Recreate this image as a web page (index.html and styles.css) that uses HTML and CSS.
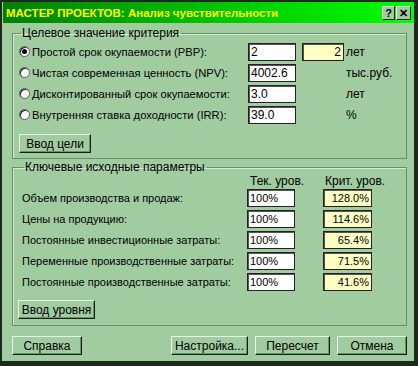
FILE: index.html
```html
<!DOCTYPE html>
<html>
<head>
    <title>МАСТЕР ПРОЕКТОВ: Анализ чувствительности</title>
    <link rel="stylesheet" href="styles.css">
</head>
<body>
    <div class="window">
        <div class="titlebar">
            <span class="title">МАСТЕР ПРОЕКТОВ: Анализ чувствительности</span>
            <div class="tb-buttons">
                <span class="tb-btn">?</span>
                <span class="tb-btn close">✕</span>
            </div>
        </div>

        <div class="content">
            <fieldset class="group goal">
                <legend>Целевое значение критерия</legend>
                <div class="crit-row">
                    <span class="radio checked"></span>
                    <span class="lbl">Простой срок окупаемости (PBP):</span>
                    <span class="field">2</span>
                    <span class="field crit">2</span>
                    <span class="unit">лет</span>
                </div>
                <div class="crit-row">
                    <span class="radio"></span>
                    <span class="lbl">Чистая современная ценность (NPV):</span>
                    <span class="field">4002.6</span>
                    <span></span>
                    <span class="unit">тыс.руб.</span>
                </div>
                <div class="crit-row">
                    <span class="radio"></span>
                    <span class="lbl">Дисконтированный срок окупаемости:</span>
                    <span class="field">3.0</span>
                    <span></span>
                    <span class="unit">лет</span>
                </div>
                <div class="crit-row">
                    <span class="radio"></span>
                    <span class="lbl">Внутренняя ставка доходности (IRR):</span>
                    <span class="field">39.0</span>
                    <span></span>
                    <span class="unit">%</span>
                </div>
                <button class="btn goal-btn">Ввод цели</button>
            </fieldset>

            <fieldset class="group params">
                <legend>Ключевые исходные параметры</legend>
                <div class="param-head">
                    <span></span>
                    <span>Тек. уров.</span>
                    <span>Крит. уров.</span>
                </div>
                <div class="param-row">
                    <span class="lbl">Объем производства и продаж:</span>
                    <span class="field">100%</span>
                    <span class="field crit">128.0%</span>
                </div>
                <div class="param-row">
                    <span class="lbl">Цены на продукцию:</span>
                    <span class="field">100%</span>
                    <span class="field crit">114.6%</span>
                </div>
                <div class="param-row">
                    <span class="lbl">Постоянные инвестиционные затраты:</span>
                    <span class="field">100%</span>
                    <span class="field crit">65.4%</span>
                </div>
                <div class="param-row">
                    <span class="lbl">Переменные производственные затраты:</span>
                    <span class="field">100%</span>
                    <span class="field crit">71.5%</span>
                </div>
                <div class="param-row">
                    <span class="lbl">Постоянные производственные затраты:</span>
                    <span class="field">100%</span>
                    <span class="field crit">41.6%</span>
                </div>
                <button class="btn level-btn">Ввод уровня</button>
            </fieldset>

            <div class="footer">
                <button class="btn help-btn">Справка</button>
                <div class="footer-right">
                    <button class="btn setup-btn">Настройка...</button>
                    <button class="btn calc-btn">Пересчет</button>
                    <button class="btn cancel-btn">Отмена</button>
                </div>
            </div>
        </div>
    </div>
</body>
</html>
```

FILE: styles.css
```css
body {
    margin: 0;
    background-color: #1c2a1c;
    font-family: "Liberation Sans", Arial, sans-serif;
    font-size: 11px;
    color: #000;
}
.window {
    width: 412px;
    height: 359px;
    background-color: #a0cca0;
    border-top: 2px solid #1c2a1c;
    border-left: 2px solid #1c2a1c;
    border-right: 4px solid #1c2a1c;
    border-bottom: 5px solid #1c2a1c;
}
.titlebar {
    height: 21px;
    margin-left: 1px;
    background: linear-gradient(to right, #008000, #00c800 55%, #00ff00);
    display: flex;
    align-items: center;
    justify-content: space-between;
    padding: 0 3px 0 3px;
}
.title {
    color: #ffff00;
    font-weight: bold;
    font-size: 11.5px;
}
.tb-buttons {
    display: flex;
    gap: 1px;
}
.tb-btn {
    width: 11px;
    height: 12px;
    background-color: #a0cca0;
    border: 1px solid;
    border-color: #e6f4e6 #1a1a1a #1a1a1a #e6f4e6;
    font-weight: bold;
    font-size: 11px;
    line-height: 12px;
    text-align: center;
}
.tb-btn.close {
    width: 13px;
}
.content {
    padding: 4px 7px 0 10px;
}
.group {
    margin: 0;
    border: 1px solid #66906a;
    box-shadow: inset 1px 1px 0 #d2ead2;
    min-inline-size: 0;
}
.group legend {
    padding: 0 2px 0 1px;
    line-height: 13px;
    margin-left: 2px;
    font-size: 12px;
}
.goal {
    padding: 1px 4px 5px 6px;
    font-size: 11.2px;
}
.crit-row {
    display: grid;
    grid-template-columns: 13px 216px 54px 44px auto;
    align-items: center;
    height: 21px;
    white-space: nowrap;
}
.crit-row .field {
    width: 42px;
    font-size: 12px;
}
.crit-row .field.crit {
    width: 36px;
}
.unit {
    font-size: 12px;
}
.radio {
    width: 9px;
    height: 9px;
    border-radius: 50%;
    background-color: #fff;
    border: 1px solid #5a5a5a;
    box-shadow: inset 1px 1px 0 #222;
    position: relative;
}
.radio.checked::after {
    content: "";
    position: absolute;
    left: 2px;
    top: 2px;
    width: 5px;
    height: 5px;
    border-radius: 50%;
    background-color: #000;
}
.field {
    height: 16px;
    line-height: 16px;
    background-color: #fff;
    border: 1px solid #222;
    box-shadow: inset 1px 1px 0 #555;
    padding: 0 2px;
}
.field.crit {
    background-color: #ffffc4;
    text-align: right;
}
.btn {
    display: block;
    height: 19px;
    background-color: #a0cca0;
    border: 1px solid;
    border-color: #e6f4e6 #1a1a1a #1a1a1a #e6f4e6;
    box-shadow: inset -1px -1px 0 #6a946a;
    font-family: "Liberation Sans", Arial, sans-serif;
    font-size: 12px;
    color: #000;
    padding: 0;
}
.goal-btn {
    width: 72px;
    margin-top: 9px;
}
.params {
    margin-top: 2px;
    padding: 0 4px 6px 9px;
}
.param-head {
    display: grid;
    grid-template-columns: 225px 76px auto;
    height: 13px;
    align-items: center;
    font-size: 12px;
}
.param-head span:nth-child(2) {
    padding-left: 3px;
}
.param-head span:nth-child(3) {
    padding-left: 2px;
}
.param-row {
    display: grid;
    grid-template-columns: 225px 76px 49px;
    align-items: center;
    height: 21px;
    white-space: nowrap;
}
.param-row .field {
    width: 42px;
}
.param-row .field.crit {
    width: 43px;
}
.level-btn {
    width: 77px;
    margin-top: 8px;
    margin-left: -4px;
}
.footer {
    display: flex;
    justify-content: space-between;
    margin-top: 10px;
}
.footer-right {
    display: flex;
    gap: 7px;
}
.help-btn {
    width: 70px;
}
.setup-btn {
    width: 77px;
}
.calc-btn {
    width: 75px;
}
.cancel-btn {
    width: 70px;
}
```
